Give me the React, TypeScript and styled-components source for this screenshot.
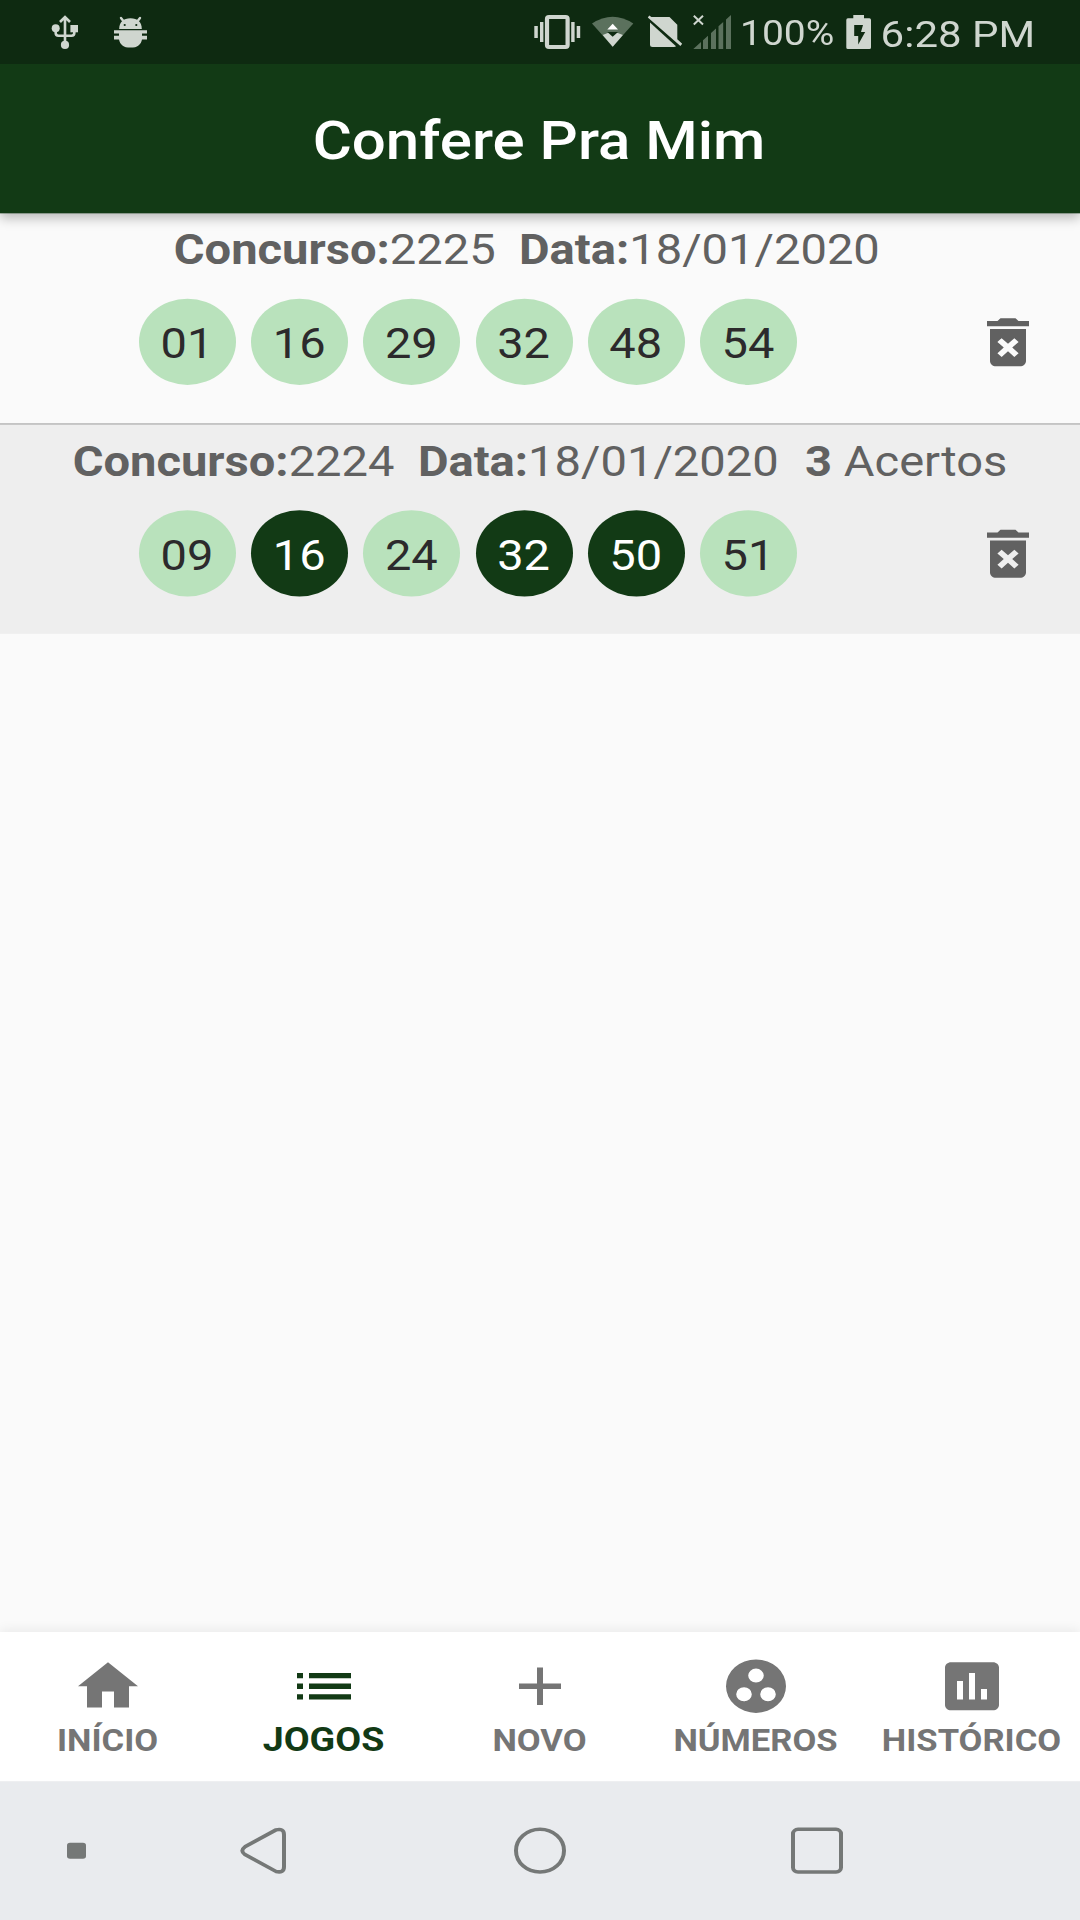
import React from "react";
import styled, { createGlobalStyle } from "styled-components";

const GlobalStyle = createGlobalStyle`
  * { box-sizing: border-box; }
  html, body { margin: 0; padding: 0; background: #fafafa; }
  body { font-family: Roboto, "Noto Sans", sans-serif; overflow: hidden; }
`;

/* The phone is laid out on its native 1080x2160 canvas and shown at 1080x1920. */
const Viewport = styled.div`
  width: 1080px;
  height: 1920px;
  overflow: hidden;
`;

const Device = styled.div`
  width: 1080px;
  height: 2160px;
  display: flex;
  flex-direction: column;
  background: #fafafa;
  transform: scaleY(0.888889);
  transform-origin: 0 0;
`;

const StatusBar = styled.header`
  height: 72px;
  flex: none;
  display: flex;
  justify-content: space-between;
  background: #0e2a11;
  color: #cfd6cf;
  z-index: 2;
`;

const StatusGroup = styled.div`
  display: flex;
  height: 72px;
`;

const StatusSvg = styled.svg`
  height: 72px;
  flex: none;
  display: block;
`;

const StatusText = styled.span<{ $size: number; $width: number; $shift?: number }>`
  width: ${(p) => p.$width}px;
  height: 72px;
  margin-left: ${(p) => p.$shift ?? 0}px;
  line-height: 77px;
  font-size: ${(p) => p.$size}px;
  white-space: nowrap;
`;

const AppBar = styled.div`
  height: 168px;
  flex: none;
  display: flex;
  align-items: center;
  justify-content: center;
  background: #123a15;
  color: #fff;
  box-shadow: 0 5px 12px rgba(0, 0, 0, 0.27);
  z-index: 1;
`;

const Title = styled.h1`
  margin: 0;
  padding: 5px 2px 0 0;
  font-size: 60px;
  line-height: 70px;
  font-weight: 500;
`;

const List = styled.main`
  flex: 1;
  display: flex;
  flex-direction: column;
`;

const Row = styled.section<{ $shaded?: boolean }>`
  display: flex;
  flex-direction: column;
  height: ${(p) => (p.$shaded ? 235 : 238)}px;
  background: ${(p) => (p.$shaded ? "#eeeeee" : "#fafafa")};
  border-bottom: ${(p) => (p.$shaded ? "0" : "2px solid #bdbdbd")};
`;

const RowHeading = styled.div`
  margin-top: 13px;
  height: 56px;
  line-height: 56px;
  text-align: center;
  white-space: pre;
  font-size: 47.1px;
  color: #616161;
  b { font-weight: 700; }
`;

const DateText = styled.span`
  padding-right: 3px;
`;

const RowBody = styled.div`
  display: flex;
  align-items: center;
  justify-content: space-between;
  margin-top: 27px;
  height: 97px;
  padding: 0 36px 0 139px;
`;

const Balls = styled.div`
  display: flex;
  gap: 15.2px;
`;

const Ball = styled.span<{ $hit?: boolean }>`
  width: 97px;
  height: 97px;
  border-radius: 50%;
  display: flex;
  align-items: center;
  justify-content: center;
  padding: 4px 1px 0 0;
  font-size: 47px;
  background: ${(p) => (p.$hit ? "#123a15" : "#b9e2bc")};
  color: ${(p) => (p.$hit ? "#ffffff" : "#2c2a2c")};
`;

const IconButton = styled.button`
  width: 72px;
  height: 72px;
  padding: 0;
  border: 0;
  background: none;
  color: #616161;
`;

const Glyph = styled.svg`
  width: 72px;
  height: 72px;
  display: block;
  fill: currentColor;
`;

const TabBar = styled.nav`
  height: 168px;
  flex: none;
  display: grid;
  grid-template-columns: repeat(5, 216px);
  background: #fff;
  box-shadow: 0 -2px 12px rgba(0, 0, 0, 0.07);
`;

const Tab = styled.a<{ $active?: boolean }>`
  display: flex;
  flex-direction: column;
  align-items: center;
  padding-top: 25px;
  color: ${(p) => (p.$active ? "#123a15" : "#757575")};
`;

const TabLabel = styled.span<{ $active?: boolean }>`
  height: 40px;
  line-height: 40px;
  margin-top: ${(p) => (p.$active ? 4 : 5)}px;
  padding-right: 1px;
  font-size: ${(p) => (p.$active ? 37.6 : 34.6)}px;
  font-weight: 700;
  white-space: nowrap;
`;

const SystemNav = styled.footer`
  height: 156px;
  flex: none;
  display: flex;
  align-items: center;
  background: #e9ebee;
`;

const SystemSlot = styled.span<{ $before: number }>`
  display: flex;
  margin-left: ${(p) => p.$before}px;
`;

const Dot = styled.i`
  width: 18.6px;
  height: 18.6px;
  border-radius: 3px;
  background: #757877;
`;

const HomeRing = styled.i`
  width: 52px;
  height: 52px;
  border: 4px solid #757877;
  border-radius: 50%;
`;

const RecentSquare = styled(HomeRing)`
  border-radius: 7px;
`;

const BackSvg = styled.svg`
  width: 48px;
  height: 54px;
  display: block;
  fill: none;
  stroke: #757877;
`;

const icons = {
  trash:
    "M6 19c0 1.1.9 2 2 2h8c1.1 0 2-.9 2-2V7H6v12zm2.46-7.12l1.41-1.41L12 12.59l2.12-2.12 1.41 1.41L13.41 14l2.12 2.12-1.41 1.41L12 15.41l-2.12 2.12-1.41-1.41L10.59 14l-2.13-2.12zM15.5 4l-1-1h-5l-1 1H5v2h14V4z",
  home: "M10 20v-6h4v6h5v-8h3L12 3 2 12h3v8z",
  list: "M3 13h2v-2H3v2zm0 4h2v-2H3v2zm0-8h2V7H3v2zm4 4h14v-2H7v2zm0 4h14v-2H7v2zM7 7v2h14V7H7z",
  add: "M19 13h-6v6h-2v-6H5v-2h6V5h2v6h6v2z",
  group:
    "M12 2a10 10 0 1 0 0 20a10 10 0 1 0 0-20zM12 5.4a2.6 2.6 0 1 1 0 5.2a2.6 2.6 0 1 1 0-5.2zM8 12.4a2.6 2.6 0 1 1 0 5.2a2.6 2.6 0 1 1 0-5.2zM16 12.4a2.6 2.6 0 1 1 0 5.2a2.6 2.6 0 1 1 0-5.2z",
  chart:
    "M19 3H5c-1.1 0-2 .9-2 2v14c0 1.1.9 2 2 2h14c1.1 0 2-.9 2-2V5c0-1.1-.9-2-2-2zM9 17H7v-7h2v7zm4 0h-2V7h2v10zm4 0h-2v-4h2v4z",
};

const Icon = ({ name }: { name: keyof typeof icons }) => (
  <Glyph viewBox="0 0 24 24">
    <path fillRule="evenodd" d={icons[name]} />
  </Glyph>
);

/* Left side of the status bar: USB connection and debugging bug. */
const Notifications = () => (
  <StatusSvg width="160" viewBox="0 0 160 64" preserveAspectRatio="none" fill="#cfd6cf">
    <path d="M65 17V45M60 22L65 17L70 22M55.7 28V33Q55.7 35.7 58.5 35.7H71.5Q74.3 35.7 74.3 33V29" fill="none" stroke="#cfd6cf" strokeWidth="2.6" />
    <circle cx="55.7" cy="28.2" r="4" />
    <rect x="70.4" y="25" width="7.6" height="7.3" />
    <circle cx="65" cy="44.9" r="4.1" />
    <path d="M119.2 29C119.2 22 123.5 18.3 130.5 18.3S141.8 22 141.8 29Z" />
    <path d="M121 18L123.7 21.5M140 18L137.3 21.5" stroke="#cfd6cf" strokeWidth="2.4" strokeLinecap="round" />
    <circle cx="124.7" cy="25" r="1.1" fill="#0e2a11" />
    <circle cx="136.3" cy="25" r="1.1" fill="#0e2a11" />
    <path d="M114 30.3H147V33.4H142V35.8H147V39.4H142C141 44.5 137.5 47.6 130.5 47.6S120 44.5 119 39.4H114V35.8H119V33.4H114Z" />
  </StatusSvg>
);

/* Vibrate, wifi, missing SIM and empty signal; x origin is 530. */
const Radios = () => (
  <StatusSvg width="210" viewBox="530 0 210 64" preserveAspectRatio="none" fill="#cfd6cf">
    <rect x="547" y="17" width="20.6" height="30" rx="2" fill="none" stroke="#cfd6cf" strokeWidth="4.2" />
    <path d="M534.3 26h3.5v12h-3.5zM540 22h3.4v20h-3.4zM571.2 22h3.4v20h-3.4zM576.7 26h3.5v12h-3.5z" />
    <path d="M592 23.5Q612.7 10 633.3 23.5L612.7 46.8Z" fill="#5b715d" />
    <path d="M602.7 35Q612.7 29.5 622.9 35L612.7 46.8Z" />
    <path d="M607.3 32H618L612.7 36.8Z" fill="#0e2a11" />
    <path d="M607.3 29.4H618L612.7 23.8Z" fill="#ffffff" />
    <path d="M649.3 15.6L651.4 17H669.5L677.3 24.8V39.3L682.2 43.8L680.4 46L647.8 17.5Z" />
    <path d="M650 22.4L676 46.3Q675.2 47 674 47H652.5Q650 47 650 44.5Z" />
    <path d="M693.8 15.8L703 24.4M703 15.8L693.8 24.4" stroke="#cfd6cf" strokeWidth="2" />
    <path d="M693.3 49L701 42V49ZM703 40.2L708 35.7V49H703ZM711 33L716 28.5V49H711ZM718.5 26.3L723.2 22V49H718.5ZM726 19.5L731 15V49H726Z" fill="#5b715d" />
  </StatusSvg>
);

const Battery = () => (
  <StatusSvg width="42" viewBox="841 0 42 64" preserveAspectRatio="none" fill="#cfd6cf">
    <path fillRule="evenodd" d="M853.3 15H864V18.3H869.4Q871 18.3 871 19.9V47.4Q871 49 869.4 49H847.9Q846.3 49 846.3 47.4V19.9Q846.3 18.3 847.9 18.3H853.3ZM854.2 25V36H858.2V44.6L865.2 32H861L863 25Z" />
  </StatusSvg>
);

interface Game {
  contest: string;
  date: string;
  hits?: number;
  numbers: [string, boolean][];
}

const games: Game[] = [
  {
    contest: "2225",
    date: "18/01/2020",
    numbers: [["01", false], ["16", false], ["29", false], ["32", false], ["48", false], ["54", false]],
  },
  {
    contest: "2224",
    date: "18/01/2020",
    hits: 3,
    numbers: [["09", false], ["16", true], ["24", false], ["32", true], ["50", true], ["51", false]],
  },
];

const tabs: { label: string; icon: keyof typeof icons; active?: boolean }[] = [
  { label: "INÍCIO", icon: "home" },
  { label: "JOGOS", icon: "list", active: true },
  { label: "NOVO", icon: "add" },
  { label: "NÚMEROS", icon: "group" },
  { label: "HISTÓRICO", icon: "chart" },
];

const GameRow = ({ game, shaded }: { game: Game; shaded: boolean }) => (
  <Row $shaded={shaded}>
    <RowHeading>
      <b>Concurso:</b>
      {game.contest + "  "}
      <b>Data:</b>
      <DateText>{game.date + "  "}</DateText>
      {game.hits !== undefined && (
        <>
          <b>{game.hits}</b>
          {" Acertos"}
        </>
      )}
    </RowHeading>
    <RowBody>
      <Balls>
        {game.numbers.map(([n, hit]) => (
          <Ball key={n} $hit={hit}>{n}</Ball>
        ))}
      </Balls>
      <IconButton aria-label="Excluir">
        <Icon name="trash" />
      </IconButton>
    </RowBody>
  </Row>
);

export default function App() {
  return (
    <Viewport>
      <GlobalStyle />
      <Device>
        <StatusBar>
          <Notifications />
          <StatusGroup>
            <Radios />
            <StatusText $size={39} $width={101}>100%</StatusText>
            <Battery />
            <StatusText $size={42} $width={199.4} $shift={-2.4}>6:28 PM</StatusText>
          </StatusGroup>
        </StatusBar>
        <AppBar>
          <Title>Confere Pra Mim</Title>
        </AppBar>
        <List>
          {games.map((g, i) => (
            <GameRow key={g.contest} game={g} shaded={i % 2 === 1} />
          ))}
        </List>
        <TabBar>
          {tabs.map((t) => (
            <Tab key={t.label} $active={t.active}>
              <Icon name={t.icon} />
              <TabLabel $active={t.active}>{t.label}</TabLabel>
            </Tab>
          ))}
        </TabBar>
        <SystemNav>
          <SystemSlot $before={67}><Dot /></SystemSlot>
          <SystemSlot $before={153.4}>
            <BackSvg viewBox="0 0 48 54">
              <path d="M37 3.6L6 22.6Q0.6 27 6 31.4L37 50.4Q45 52.5 45 45V9Q45 1.5 37 3.6Z" strokeWidth="4" />
            </BackSvg>
          </SystemSlot>
          <SystemSlot $before={227}><HomeRing /></SystemSlot>
          <SystemSlot $before={225}><RecentSquare /></SystemSlot>
        </SystemNav>
      </Device>
    </Viewport>
  );
}
